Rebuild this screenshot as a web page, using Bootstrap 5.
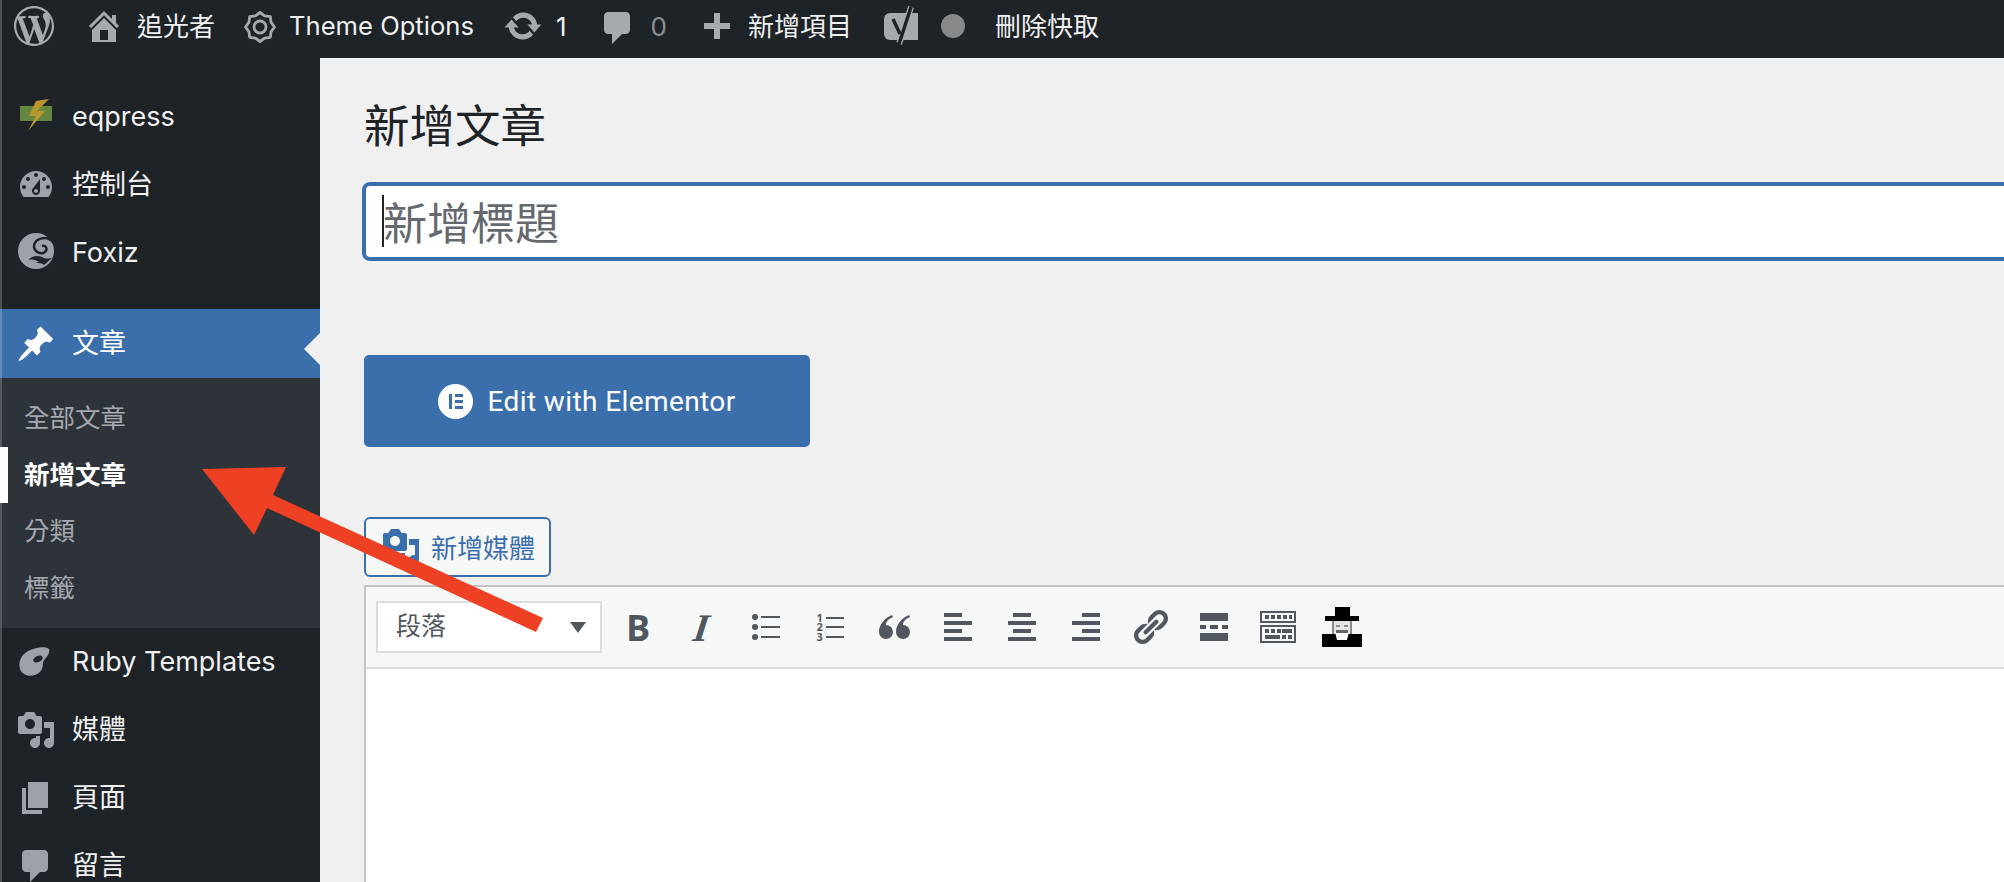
<!DOCTYPE html>
<html lang="zh-Hant">
<head>
  <meta charset="UTF-8" />
  <title>新增文章</title>
  <link href="https://cdn.jsdelivr.net/npm/bootstrap@5.3.3/dist/css/bootstrap.min.css" rel="stylesheet"/>
  <style>
    html, body { height: 882px; overflow: hidden; }
    body {
      position: relative;
      background: #f0f0f1;
      font-family: Inter, "Noto Sans CJK TC", sans-serif;
      color: #1d2327;
    }
    svg { display: block; flex: none; }

    /* admin bar */
    .admin-bar { height: 58px; background: #1d2327; color: #f0f0f1; font-size: 26px; padding-bottom: 6px; }
    .admin-bar svg { fill: #a7aaad; }
    .bar-wp { margin-left: 14px; }
    .bar-home { margin-left: 30px; }
    .bar-site { margin-left: 13px; }
    .bar-gear { margin-left: 29px; margin-top: 1px; }
    .bar-theme { margin-left: 13px; font-size: 25.6px; }
    .bar-update { margin-left: 29px; }
    .bar-count { margin-left: 13px; }
    .bar-comment { margin-left: 31px; margin-top: 4px; }
    .bar-zero { margin-left: 13px; color: #8c8f94; }
    .bar-plus { margin-left: 37px; }
    .bar-new { margin-left: 18px; }
    .bar-yoast { margin-left: 32px; }
    .bar-dot { width: 24px; height: 24px; border-radius: 50%; background: #888; margin-left: 23px; }
    .bar-cache { margin-left: 30px; }

    /* side menu */
    .side-menu { width: 320px; flex: none; background: #1d2327; padding-top: 25px; color: #f0f0f1; font-size: 27px; height: 824px; overflow: hidden; }
    .side-item { height: 68px; padding-left: 16px; gap: 16px; }
    .side-item span { padding-top: 1px; }
    .side-item svg { fill: #9ca2a7; }
    .side-item .side-ico { width: 40px; height: 40px; }
    .side-active { position: relative; margin-top: 22px; height: 69px; background: #3b6fab; color: #fff; }
    .side-active svg { fill: #fff; }
    .side-active::after {
      content: ""; position: absolute; right: 0; top: 24px;
      border: 16px solid transparent; border-right-color: #f0f0f1; border-left: 0;
    }
    .side-sub { background: #2e333a; height: 250px; padding: 12px 0; font-size: 25.5px; color: #a4a9b0; }
    .sub-item { height: 56.5px; padding-left: 24px; }
    .sub-current { color: #fff; font-weight: 700; position: relative; }
    .sub-current::before { content: ""; position: absolute; left: 0; top: 0; width: 8px; height: 100%; background: #fff; }
    .edge-strip { position: absolute; left: 0; top: 0; width: 2px; height: 882px; background: rgba(255,255,255,.2); }

    /* main column */
    .post-area { flex: 1; min-width: 0; padding-left: 44px; overflow: hidden; height: 824px; }
    .post-heading { font-size: 45.5px; line-height: 58px; margin: 40px 0 26px; font-weight: 400; color: #1d2327; }
    .title-wrap { position: relative; margin: 0 -20px 0 -2px; }
    .title-input.form-control {
      height: 79px; border: 4px solid #3b6fab; border-radius: 8px; padding: 4px 17px 0;
      font-size: 44px; color: #1d2327; box-shadow: none;
    }
    .title-input::placeholder { color: #646970; opacity: 1; }
    .title-caret { position: absolute; left: 20px; top: 13px; width: 2px; height: 52px; background: #1d2327; }
    .elementor-btn.btn {
      width: 446px; height: 92px; margin-top: 94px; background: #3b6fab; border: 0; border-radius: 5px;
      color: #fff; font: 400 28px Roboto, sans-serif; letter-spacing: .4px; gap: 14px;
    }
    .media-btn.btn {
      width: 187px; height: 60px; margin-top: 70px; background: #f6f7f7; border: 2px solid #3b6fab; border-radius: 6px;
      color: #3b6fab; font-size: 26px; padding: 0 0 0 15px; gap: 10px;
    }
    .media-btn span { padding-top: 3px; }
    .media-btn svg { fill: #3b6fab; }

    /* editor */
    .editor-box { margin: 8px -20px 0 0; height: 297px; border-top: 2px solid #c3c4c7; border-left: 2px solid #c3c4c7; background: #fff; }
    .editor-bar { height: 82px; background: #f6f7f7; border-bottom: 2px solid #dcdcde; padding-left: 10px; }
    .format-pick { width: 226px; height: 52px; margin-right: 4px; background: #fff; border: 2px solid #dcdcde; color: #50575e; font-size: 25px; padding: 0 14px 0 18px; }
    .pick-arrow { border: 8px solid transparent; border-top: 11px solid #50575e; border-bottom: 0; }
    .tool-btn { width: 64px; height: 64px; color: #50575e; }
    .tool-btn svg { fill: #50575e; }
    .tool-b { font: 700 36px "Open Sans", sans-serif; }
    .tool-i { font: italic 700 39px "Liberation Serif", serif; }
    .tool-i span { transform: skewX(-8deg); }
    .num-stack { width: 8px; margin-right: 1px; font: 700 11px/9.5px "Open Sans", sans-serif; word-break: normal; }

    .soft-edge { filter: blur(.5px); }
    .arrow-layer { position: absolute; left: 0; top: 0; pointer-events: none; }
  </style>
</head>
<body>

  <!-- admin bar -->
  <div class="admin-bar d-flex align-items-center">
    <svg class="bar-wp" width="40" height="40" viewBox="0 0 20 20"><path d="M20 10c0-5.51-4.49-10-10-10C4.48 0 0 4.49 0 10c0 5.52 4.48 10 10 10 5.51 0 10-4.48 10-10zM7.78 15.37L4.37 6.22c.55-.02 1.17-.08 1.17-.08.5-.06.44-1.13-.06-1.11 0 0-1.45.11-2.37.11-.18 0-.37 0-.58-.01C4.12 2.69 6.87 1.11 10 1.11c2.33 0 4.45.87 6.05 2.34-.68-.11-1.65.39-1.65 1.58 0 .74.45 1.36.9 2.1.35.61.55 1.36.55 2.46 0 1.49-1.4 5-1.4 5l-3.03-8.37c.54-.02.82-.17.82-.17.5-.05.44-1.25-.06-1.22 0 0-1.44.12-2.38.12-.87 0-2.33-.12-2.33-.12-.5-.03-.56 1.2-.06 1.22l.92.08 1.26 3.41zM17.41 10c.24-.64.74-1.87.43-4.25.7 1.29 1.05 2.71 1.05 4.25 0 3.29-1.73 6.24-4.4 7.78.97-2.59 1.94-5.2 2.92-7.78zM6.1 18.09C3.12 16.65 1.11 13.53 1.11 10c0-1.3.23-2.48.72-3.59C3.25 10.3 4.67 14.2 6.1 18.09zm4.03-6.63l2.58 6.98c-.86.29-1.76.45-2.71.45-.79 0-1.57-.11-2.29-.33.81-2.38 1.62-4.74 2.42-7.1z"/></svg>
    <svg class="bar-home" width="40" height="40" viewBox="0 0 20 20"><path d="M16 8.5l1.53 1.53-1.06 1.06L10 4.62l-6.47 6.47-1.06-1.06L10 2.5l4 4v-2h2v4zm-6-2.46l6 5.99V18H4v-5.97zM12 17v-5H8v5h4z"/></svg>
    <span class="bar-site">追光者</span>
    <svg class="bar-gear" width="32" height="32" viewBox="0 0 32 32" style="fill:none;stroke:#a7aaad;stroke-width:2.8;stroke-linejoin:round"><path d="M16 1.5 20.6 4.9 26.3 5.7 27.1 11.4 30.5 16 27.1 20.6 26.3 26.3 20.6 27.1 16 30.5 11.4 27.1 5.7 26.3 4.9 20.6 1.5 16 4.9 11.4 5.7 5.7 11.4 4.9Z"/><circle cx="16" cy="16" r="6"/></svg>
    <span class="bar-theme">Theme Options</span>
    <svg class="bar-update" width="40" height="40" viewBox="0 0 20 20"><path d="M10.2 3.28c3.53 0 6.43 2.61 6.92 6h2.08l-3.5 4-3.5-4h2.32c-.45-1.97-2.21-3.45-4.32-3.45-1.45 0-2.73.71-3.54 1.78L4.95 5.66C6.23 4.2 8.11 3.28 10.2 3.28zm-.4 13.44c-3.52 0-6.43-2.61-6.92-6H.8l3.5-4c1.17 1.33 2.33 2.67 3.5 4H5.48c.45 1.97 2.21 3.45 4.32 3.45 1.45 0 2.73-.71 3.54-1.78l1.71 1.95c-1.28 1.46-3.15 2.38-5.25 2.38z"/></svg>
    <span class="bar-count">1</span>
    <svg class="bar-comment" width="40" height="40" viewBox="0 0 20 20"><path d="M5 2h9c1.1 0 2 .9 2 2v7c0 1.1-.9 2-2 2h-2l-5 5v-5H5c-1.1 0-2-.9-2-2V4c0-1.1.9-2 2-2z"/></svg>
    <span class="bar-zero">0</span>
    <svg class="bar-plus" width="26" height="26" viewBox="0 0 26 26"><path d="M10 0h6v10h10v6H16v10h-6V16H0v-6h10z"/></svg>
    <span class="bar-new">新增項目</span>
    <svg class="bar-yoast" width="34" height="40" viewBox="0 0 34 40"><path d="M6 7h28v27H6a6 6 0 0 1-6-6V13a6 6 0 0 1 6-6z"/><path d="M9 13l7 15M27 1 15 38" fill="none" stroke="#a7aaad" stroke-width="6"/><path d="M9 13l7 15M27 1 15 38H10" fill="none" stroke="#1d2327" stroke-width="3.4"/></svg>
    <span class="bar-dot"></span>
    <span class="bar-cache">刪除快取</span>
  </div>

  <div class="d-flex">
    <!-- side menu -->
    <nav class="side-menu">
      <div class="side-item d-flex align-items-center">
        <svg class="side-ico soft-edge" viewBox="0 0 40 40"><rect x="4" y="9" width="32" height="15" fill="#66873f"/><path d="M33 2 20 4 13 19h7L12 34l17-20h-8z" fill="#b8972f"/></svg>
        <span>eqpress</span>
      </div>
      <div class="side-item d-flex align-items-center">
        <svg class="side-ico" viewBox="0 0 20 20"><path d="M3.76 16h12.48c1.1-1.37 1.76-3.11 1.76-5 0-4.42-3.58-8-8-8s-8 3.58-8 8c0 1.89.66 3.63 1.76 5zM10 4c.55 0 1 .45 1 1s-.45 1-1 1-1-.45-1-1 .45-1 1-1zM6 6c.55 0 1 .45 1 1s-.45 1-1 1-1-.45-1-1 .45-1 1-1zm8 0c.55 0 1 .45 1 1s-.45 1-1 1-1-.45-1-1 .45-1 1-1zm-5.37 5.55L12 7v6c0 1.1-.9 2-2 2s-2-.9-2-2c0-.57.24-1.08.63-1.45zM4 10c.55 0 1 .45 1 1s-.45 1-1 1-1-.45-1-1 .45-1 1-1zm12 0c.55 0 1 .45 1 1s-.45 1-1 1-1-.45-1-1 .45-1 1-1zm-5 3c0-.55-.45-1-1-1s-1 .45-1 1 .45 1 1 1 1-.45 1-1z"/></svg>
        <span>控制台</span>
      </div>
      <div class="side-item d-flex align-items-center">
        <svg class="side-ico" viewBox="0 0 40 40"><circle cx="20" cy="18" r="18"/><path d="M37 9C31 2 19 5 18 13c0 6 7 9 11 6 3-3 1-7-3-6" fill="none" stroke="#1d2327" stroke-width="2.5"/><path d="M12 27c5-1 8 0 11 2-1 0-2 0-3 1 3 0 6 0 8 2l9-8c-4 2-7 2-11 0-5-2-10-1-14 3z" fill="#1d2327"/></svg>
        <span>Foxiz</span>
      </div>
      <div class="side-item side-active d-flex align-items-center">
        <svg class="side-ico" viewBox="0 0 20 20"><path d="M10.44 3.02l1.82-1.82 6.36 6.35-1.83 1.82c-1.05-.68-2.48-.57-3.41.36l-.75.75c-.92.93-1.04 2.35-.35 3.41l-1.83 1.82-2.41-2.41-2.8 2.79c-.42.42-3.38 2.71-3.8 2.29s1.86-3.39 2.28-3.81l2.79-2.79L4.1 9.36l1.83-1.82c1.05.69 2.48.57 3.4-.36l.75-.75c.93-.92 1.05-2.35.36-3.41z"/></svg>
        <span>文章</span>
      </div>
      <div class="side-sub">
        <div class="sub-item d-flex align-items-center">全部文章</div>
        <div class="sub-item sub-current d-flex align-items-center">新增文章</div>
        <div class="sub-item d-flex align-items-center">分類</div>
        <div class="sub-item d-flex align-items-center">標籤</div>
      </div>
      <div class="side-item d-flex align-items-center">
        <svg class="side-ico" viewBox="0 0 40 40"><path d="M33 7C30 4 20 5 12 9 5 13 2 20 4 27c2 6 9 8 15 6 6-2 8-7 8-12 0-4 8-8 6-14z"/><ellipse cx="22" cy="17" rx="5" ry="3" transform="rotate(-25 22 17)" fill="#1d2327"/></svg>
        <span>Ruby Templates</span>
      </div>
      <div class="side-item d-flex align-items-center">
        <svg class="side-ico" viewBox="0 0 20 20"><path d="M13 11V4c0-.55-.45-1-1-1h-1.67L9 1H5L3.67 3H2c-.55 0-1 .45-1 1v7c0 .55.45 1 1 1h10c.55 0 1-.45 1-1zM7 4.5c1.38 0 2.5 1.12 2.5 2.5S8.38 9.5 7 9.5 4.5 8.38 4.5 7 5.62 4.5 7 4.5zM14 6h5v10.5c0 1.38-1.12 2.5-2.5 2.5S14 17.88 14 16.5s1.12-2.5 2.5-2.5c.17 0 .34.02.5.05V9h-3V6zm-4 8.05V13h2v3.5c0 1.38-1.12 2.5-2.5 2.5S7 17.88 7 16.5 8.12 14 9.5 14c.17 0 .34.02.5.05z"/></svg>
        <span>媒體</span>
      </div>
      <div class="side-item d-flex align-items-center">
        <svg class="side-ico" viewBox="0 0 20 20"><path d="M6 15V2h10v13H6zm-1 1h8v2H3V5h2v11z"/></svg>
        <span>頁面</span>
      </div>
      <div class="side-item d-flex align-items-center">
        <svg class="side-ico" viewBox="0 0 20 20"><path d="M5 2h9c1.1 0 2 .9 2 2v7c0 1.1-.9 2-2 2h-2l-5 5v-5H5c-1.1 0-2-.9-2-2V4c0-1.1.9-2 2-2z"/></svg>
        <span>留言</span>
      </div>
    </nav>

    <!-- post editor -->
    <main class="post-area">
      <h1 class="post-heading">新增文章</h1>
      <div class="title-wrap">
        <input class="form-control title-input" type="text" placeholder="新增標題">
        <span class="title-caret"></span>
      </div>
      <button class="btn elementor-btn d-flex align-items-center justify-content-center">
        <svg width="35" height="35" viewBox="0 0 35 35"><circle cx="17.5" cy="17.5" r="17.5" fill="#fff"/><path d="M11 10h3v15h-3zM17 10h8v3h-8zM17 16h8v3h-8zM17 22h8v3h-8z" fill="#3b6fab"/></svg>
        <span>Edit with Elementor</span>
      </button>
      <button class="btn media-btn d-flex align-items-center">
        <svg width="40" height="40" viewBox="0 0 20 20"><path d="M13 11V4c0-.55-.45-1-1-1h-1.67L9 1H5L3.67 3H2c-.55 0-1 .45-1 1v7c0 .55.45 1 1 1h10c.55 0 1-.45 1-1zM7 4.5c1.38 0 2.5 1.12 2.5 2.5S8.38 9.5 7 9.5 4.5 8.38 4.5 7 5.62 4.5 7 4.5zM14 6h5v10.5c0 1.38-1.12 2.5-2.5 2.5S14 17.88 14 16.5s1.12-2.5 2.5-2.5c.17 0 .34.02.5.05V9h-3V6zm-4 8.05V13h2v3.5c0 1.38-1.12 2.5-2.5 2.5S7 17.88 7 16.5 8.12 14 9.5 14c.17 0 .34.02.5.05z"/></svg>
        <span>新增媒體</span>
      </button>

      <div class="editor-box">
        <div class="editor-bar d-flex align-items-center">
          <div class="format-pick d-flex align-items-center justify-content-between">
            <span>段落</span><span class="pick-arrow"></span>
          </div>
          <div class="tool-btn tool-b d-flex align-items-center justify-content-center">B</div>
          <div class="tool-btn tool-i d-flex align-items-center justify-content-center"><span>I</span></div>
          <div class="tool-btn d-flex align-items-center justify-content-center">
            <svg width="28" height="26" viewBox="0 0 28 26"><circle cx="3" cy="3" r="3"/><circle cx="3" cy="13" r="3"/><circle cx="3" cy="23" r="3"/><path d="M9 2h19v2H9zM9 12h19v2H9zM9 22h19v2H9z"/></svg>
          </div>
          <div class="tool-btn d-flex align-items-center justify-content-center">
            <div class="num-stack">1 2 3</div>
            <svg width="18" height="28" viewBox="0 0 18 28"><path d="M0 4h18v2H0zM0 13h18v2H0zM0 23h18v2H0z"/></svg>
          </div>
          <div class="tool-btn d-flex align-items-center justify-content-center">
            <svg width="31" height="25" viewBox="0 0 31 25"><path d="M13 0C6 3 0 9 0 17a7 7 0 1 0 7-7c0-4 3-6 7-8zM30 0c-7 3-13 9-13 17a7 7 0 1 0 7-7c0-4 3-6 7-8z"/></svg>
          </div>
          <div class="tool-btn d-flex align-items-center justify-content-center">
            <svg width="28" height="28" viewBox="0 0 28 28"><path d="M0 0h18v4H0zM0 8h28v4H0zM0 16h18v4H0zM0 24h28v4H0z"/></svg>
          </div>
          <div class="tool-btn d-flex align-items-center justify-content-center">
            <svg width="28" height="28" viewBox="0 0 28 28"><path d="M5 0h18v4H5zM0 8h28v4H0zM5 16h18v4H5zM0 24h28v4H0z"/></svg>
          </div>
          <div class="tool-btn d-flex align-items-center justify-content-center">
            <svg width="28" height="28" viewBox="0 0 28 28"><path d="M10 0h18v4H10zM0 8h28v4H0zM10 16h18v4H10zM0 24h28v4H0z"/></svg>
          </div>
          <div class="tool-btn d-flex align-items-center justify-content-center">
            <svg width="40" height="40" viewBox="0 0 20 20"><path d="M17.74 2.76c1.68 1.69 1.68 4.41 0 6.1l-1.53 1.52c-1.12 1.12-2.7 1.47-4.14 1.09l2.62-2.61.76-.77.76-.76c.84-.84.84-2.2 0-3.04-.84-.85-2.2-.85-3.04 0l-.77.76-3.38 3.38c-.37-1.44-.02-3.02 1.1-4.14l1.52-1.53c1.69-1.68 4.42-1.68 6.1 0zM8.59 13.43l5.34-5.34c.42-.42.42-1.1 0-1.52-.44-.43-1.13-.39-1.53 0l-5.33 5.34c-.42.42-.42 1.1 0 1.52.44.43 1.13.39 1.52 0zm-.76 2.29l4.14-4.15c.38 1.44.03 3.02-1.09 4.14l-1.52 1.53c-1.69 1.68-4.41 1.68-6.1 0-1.68-1.68-1.68-4.42 0-6.1l1.53-1.52c1.12-1.12 2.7-1.47 4.14-1.1l-4.14 4.15c-.85.84-.85 2.2 0 3.05.84.84 2.2.84 3.04 0z"/></svg>
          </div>
          <div class="tool-btn d-flex align-items-center justify-content-center">
            <svg width="28" height="28" viewBox="0 0 28 28"><path d="M0 0h28v8H0zM0 20h28v8H0zM0 12h6v4H0zM10 12h8v4h-8zM22 12h6v4h-6z"/></svg>
          </div>
          <div class="tool-btn d-flex align-items-center justify-content-center">
            <svg width="36" height="32" viewBox="0 0 36 32"><path fill-rule="evenodd" d="M0 0h36v12H0zM2 2v8h32V2zM0 14h36v18H0zM2 16v14h32V16z"/><path d="M5 4h4v4H5zM11 4h4v4h-4zM17 4h4v4h-4zM23 4h4v4h-4zM29 4h3v4h-3zM5 18h4v4H5zM11 18h4v4h-4zM17 18h4v4h-4zM22 18h10v4H22zM5 24h15v4H5zM22 24h4v4h-4zM28 24h4v4h-4z"/></svg>
          </div>
          <div class="tool-btn d-flex align-items-center justify-content-center">
            <svg class="soft-edge" width="40" height="40" viewBox="0 0 40 40" style="fill:#000"><path d="M13 0h15v9h9v5H3V9h10z"/><path d="M10 14h20v14H10z" fill="#e4e4e4"/><path d="M14 18h4v2h-4zM22 18h4v2h-4z" fill="#8a8a8a"/><path d="M10 14h2v13h-2zM28 14h2v13h-2z" fill="#8a8a8a"/><path d="M0 27h40v13H0z"/><path d="M13 25h14l-2 8H15z" fill="#fff"/><path d="M14 23h12v3H14z" fill="#666"/></svg>
          </div>
        </div>
      </div>
    </main>
  </div>

  <div class="edge-strip"></div>

  <!-- red annotation arrow -->
  <svg class="arrow-layer" width="2004" height="882" viewBox="0 0 2004 882"><path d="M202 469 286 467 273 495 543 618 536 632 267 508 254 535Z" fill="#ee4023"/></svg>

  <script src="https://cdn.jsdelivr.net/npm/bootstrap@5.3.3/dist/js/bootstrap.bundle.min.js"></script>
</body>
</html>
